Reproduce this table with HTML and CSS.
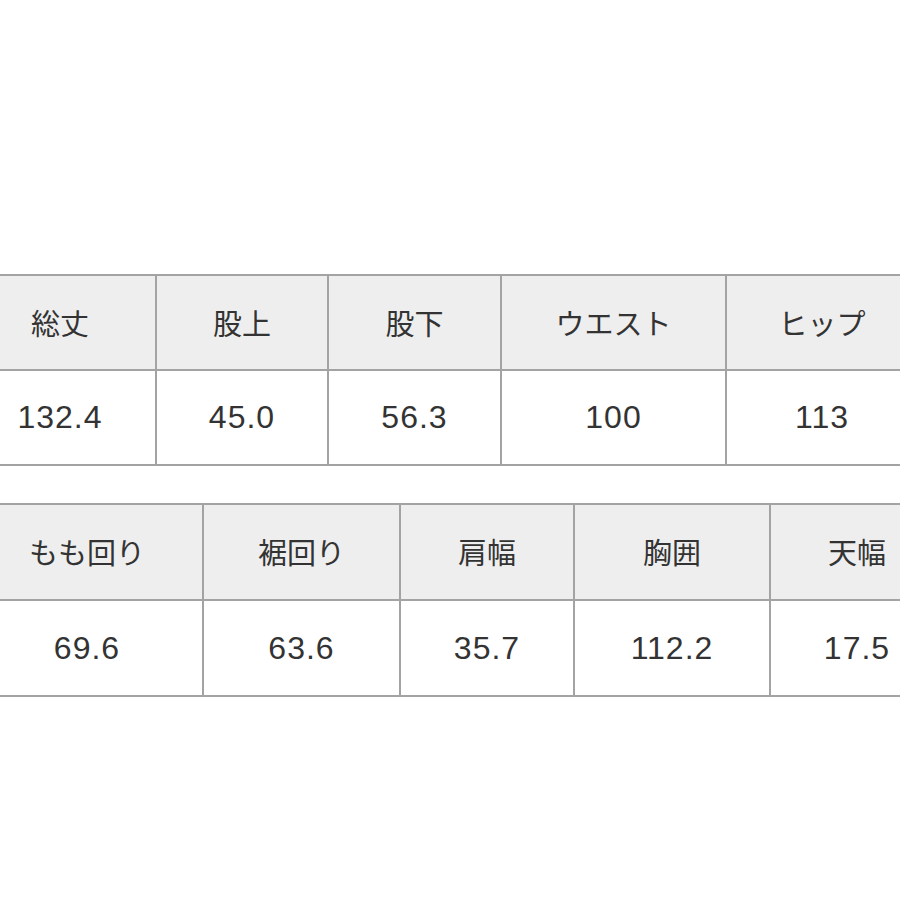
FILE: index.html
```html
<!DOCTYPE html>
<html lang="ja">
<head>
<meta charset="utf-8">
<link rel="stylesheet" href="styles.css">
</head>
<body>
<div class="page">
  <div class="sheet sheet-one">
    <div class="cell head">総丈</div>
    <div class="cell head">股上</div>
    <div class="cell head">股下</div>
    <div class="cell head">ウエスト</div>
    <div class="cell head">ヒップ</div>
    <div class="cell val">132.4</div>
    <div class="cell val">45.0</div>
    <div class="cell val">56.3</div>
    <div class="cell val">100</div>
    <div class="cell val">113</div>
  </div>
  <div class="sheet sheet-two">
    <div class="cell head">もも回り</div>
    <div class="cell head">裾回り</div>
    <div class="cell head">肩幅</div>
    <div class="cell head">胸囲</div>
    <div class="cell head">天幅</div>
    <div class="cell val">69.6</div>
    <div class="cell val">63.6</div>
    <div class="cell val">35.7</div>
    <div class="cell val">112.2</div>
    <div class="cell val">17.5</div>
  </div>
</div>
</body>
</html>
```

FILE: styles.css
```css
html, body {
  margin: 0;
  padding: 0;
  background: #ffffff;
  overflow: hidden;
  width: 900px;
  height: 900px;
}

.page {
  padding-top: 274px;
  font-family: "Liberation Sans", "Noto Sans CJK JP", sans-serif;
  color: #333333;
}

.sheet {
  display: grid;
  gap: 2px;
  padding: 2px;
  background: #a3a3a3;
  width: max-content;
}

.sheet-one {
  margin-left: -37px;
  grid-template-columns: 190px 170px 171px 223px 190px;
  grid-template-rows: 93px 93px;
}

.sheet-two {
  margin-top: 37px;
  margin-left: -30px;
  grid-template-columns: 230px 195px 172px 194px 172px;
  grid-template-rows: 94px 94px;
}

.cell {
  display: flex;
  align-items: center;
  justify-content: center;
  white-space: nowrap;
}

.head {
  background: #eeeeee;
  font-family: "Noto Sans CJK JP", "Liberation Sans", sans-serif;
  font-size: 29px;
  padding-bottom: 2px;
}

.val {
  background: #ffffff;
  font-size: 32px;
  letter-spacing: 1px;
}
```
